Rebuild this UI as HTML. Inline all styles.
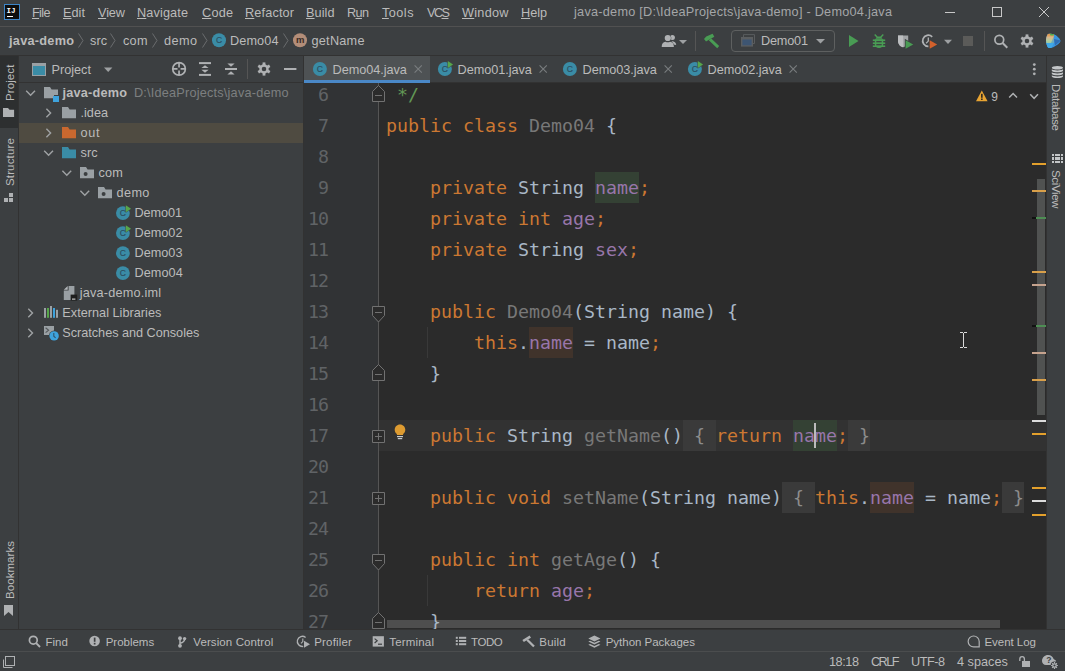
<!DOCTYPE html>
<html lang="en">
<head>
<meta charset="utf-8">
<title>java-demo - Demo04.java</title>
<style>
*{box-sizing:border-box;margin:0;padding:0}
html,body{width:1065px;height:671px;overflow:hidden;background:#3c3f41}
body{position:relative;font-family:"Liberation Sans",sans-serif;font-size:12.7px;color:#bbbbbb;line-height:1}
.a{position:absolute}
.t{position:absolute;white-space:pre;line-height:16px;height:16px}
.b{font-size:11.5px}
.m{margin-top:1px}
u{text-decoration:underline;text-underline-offset:1px;text-decoration-thickness:1px}
svg{position:absolute;overflow:visible}
/* bars */
#menubar{left:0;top:0;width:1065px;height:26px;background:#3c3f41}
#menuline{left:0;top:26px;width:1065px;height:1px;background:#515151}
#navbar{left:0;top:27px;width:1065px;height:28px;background:#3c3f41}
#navline{left:0;top:55px;width:1065px;height:1px;background:#323232}
#lstripe{left:0;top:56px;width:18px;height:573px;background:#3c3f41}
#lstripeline{left:18px;top:56px;width:1px;height:573px;background:#323232}
#projbtn{left:0;top:56px;width:18px;height:72px;background:#2d2f30}
#rstripe{left:1047px;top:56px;width:18px;height:573px;background:#3c3f41}
#rstripeline{left:1046px;top:56px;width:1px;height:573px;background:#323232}
#proj{left:19px;top:56px;width:284px;height:573px;background:#3c3f41}
#projhline{left:19px;top:82px;width:284px;height:1px;background:#323232}
#projline{left:303px;top:56px;width:1px;height:573px;background:#323232}
#outrow{left:19px;top:123px;width:284px;height:20px;background:#4f4b41}
#tabs{left:304px;top:56px;width:742px;height:27px;background:#3c3f41}
#tabsel{left:304px;top:56px;width:126px;height:24px;background:#4e5254}
#tabul{left:304px;top:80px;width:126px;height:3px;background:#4a88c7}
#tabsline{left:430px;top:82px;width:616px;height:1px;background:#323232}
#editor{left:304px;top:83px;width:742px;height:546px;background:#2b2b2b;overflow:hidden}
#gutter{left:0;top:0;width:75px;height:546px;background:#313335}
#foldline{left:74px;top:0;width:1px;height:546px;background:#555555}
#caretrow{left:75px;top:337px;width:667px;height:31px;background:#323232}
#botline{left:0;top:629px;width:1065px;height:1px;background:#323232}
#botbar{left:0;top:630px;width:1065px;height:21px;background:#3c3f41}
#statline{left:0;top:651px;width:1065px;height:1px;background:#4b4d4e}
#status{left:0;top:652px;width:1065px;height:19px;background:#3c3f41}
/* code */
.ln{position:absolute;left:0;width:24px;letter-spacing:-1px;text-align:right;font-family:"DejaVu Sans Mono","Liberation Mono",monospace;font-size:18.27px;line-height:31px;height:31px;color:#606366;white-space:pre}
.cl{position:absolute;left:82px;font-family:"DejaVu Sans Mono","Liberation Mono",monospace;font-size:18.27px;line-height:31px;height:31px;color:#a9b7c6;white-space:pre}
.hr,.hw,.fd{display:inline-block;height:31px;vertical-align:top}.hr{background:#344134}.hw{background:#40332b}.fd{background:#3a3a3a}
.k{color:#cc7832}.f{color:#9876aa}.g{color:#787878}.c{color:#629755}.fd{color:#8c8c8c}
</style>
</head>
<body>
<!-- frame -->
<div class="a" id="menubar"></div><div class="a" id="menuline"></div>
<div class="a" id="navbar"></div><div class="a" id="navline"></div>
<div class="a" id="lstripe"></div><div class="a" id="projbtn"></div><div class="a" id="lstripeline"></div>
<div class="a" id="proj"></div><div class="a" id="projhline"></div><div class="a" id="outrow"></div><div class="a" id="projline"></div>
<div class="a" id="tabs"></div><div class="a" id="tabsline"></div><div class="a" id="tabsel"></div><div class="a" id="tabul"></div>
<div class="a" id="editor">
<div class="a" id="gutter"></div>
<div class="a" id="caretrow"></div>
<div class="a" id="foldline"></div>
<div class="a" style="left:733px;top:96px;width:8px;height:236px;background:#505251"></div>
<div class="a" style="left:83px;top:537px;width:613px;height:8px;background:#4e4e4e"></div>

<div class="ln" style="top:-4px">6</div>
<div class="cl" style="top:-4px"><span class="c"> */</span></div>
<div class="ln" style="top:27px">7</div>
<div class="cl" style="top:27px"><span class="k">public class </span><span class="g">Demo04</span> {</div>
<div class="ln" style="top:58px">8</div>
<div class="ln" style="top:89px">9</div>
<div class="cl" style="top:89px">    <span class="k">private </span>String <span class="f hr">name</span><span class="k">;</span></div>
<div class="ln" style="top:120px">10</div>
<div class="cl" style="top:120px">    <span class="k">private int </span><span class="f">age</span><span class="k">;</span></div>
<div class="ln" style="top:151px">11</div>
<div class="cl" style="top:151px">    <span class="k">private </span>String <span class="f">sex</span><span class="k">;</span></div>
<div class="ln" style="top:182px">12</div>
<div class="ln" style="top:213px">13</div>
<div class="cl" style="top:213px">    <span class="k">public </span><span class="g">Demo04</span>(String name) {</div>
<div class="ln" style="top:244px">14</div>
<div class="cl" style="top:244px">        <span class="k">this</span>.<span class="f hw">name</span> = name<span class="k">;</span></div>
<div class="ln" style="top:275px">15</div>
<div class="cl" style="top:275px">    }</div>
<div class="ln" style="top:306px">16</div>
<div class="ln" style="top:337px">17</div>
<div class="cl" style="top:337px">    <span class="k">public </span>String <span class="g">getName</span>()<span class="fd"> { </span><span class="k">return </span><span class="f hr">name</span><span class="k">;</span><span class="fd"> }</span></div>
<div class="ln" style="top:368px">20</div>
<div class="ln" style="top:399px">21</div>
<div class="cl" style="top:399px">    <span class="k">public void </span><span class="g">setName</span>(String name)<span class="fd"> { </span><span class="k">this</span>.<span class="f hw">name</span> = name<span class="k">;</span><span class="fd"> }</span></div>
<div class="ln" style="top:430px">24</div>
<div class="ln" style="top:461px">25</div>
<div class="cl" style="top:461px">    <span class="k">public int </span><span class="g">getAge</span>() {</div>
<div class="ln" style="top:492px">26</div>
<div class="cl" style="top:492px">        <span class="k">return </span><span class="f">age</span><span class="k">;</span></div>
<div class="ln" style="top:523px">27</div>
<div class="cl" style="top:523px">    }</div>

<svg style="left:0;top:0" width="742" height="546"><path d="M74.5,2.5 L80.5,8.5 V18.5 H68.5 V8.5 Z" fill="#2b2b2b" stroke="#717171" stroke-width="1"/><path d="M71.0,12.5 H78.0" stroke="#717171" stroke-width="1"/></svg>
<svg style="left:0;top:0" width="742" height="546"><path d="M68.5,223.5 H80.5 V232.5 L74.5,239 L68.5,232.5 Z" fill="#2b2b2b" stroke="#717171" stroke-width="1"/><path d="M71.0,229.5 H78.0" stroke="#717171" stroke-width="1"/></svg>
<svg style="left:0;top:0" width="742" height="546"><path d="M74.5,281.5 L80.5,287.5 V297.5 H68.5 V287.5 Z" fill="#2b2b2b" stroke="#717171" stroke-width="1"/><path d="M71.0,291.5 H78.0" stroke="#717171" stroke-width="1"/></svg>
<svg style="left:0;top:0" width="742" height="546"><path d="M68.5,347.5 H80.5 V359.5 H68.5 Z" fill="#2b2b2b" stroke="#717171" stroke-width="1"/><path d="M71.0,353.5 H78.0 M74.5,350 V357" stroke="#717171" stroke-width="1"/></svg>
<svg style="left:0;top:0" width="742" height="546"><path d="M68.5,409.5 H80.5 V421.5 H68.5 Z" fill="#2b2b2b" stroke="#717171" stroke-width="1"/><path d="M71.0,415.5 H78.0 M74.5,412 V419" stroke="#717171" stroke-width="1"/></svg>
<svg style="left:0;top:0" width="742" height="546"><path d="M68.5,471.5 H80.5 V480.5 L74.5,487 L68.5,480.5 Z" fill="#2b2b2b" stroke="#717171" stroke-width="1"/><path d="M71.0,477.5 H78.0" stroke="#717171" stroke-width="1"/></svg>
<svg style="left:0;top:0" width="742" height="546"><path d="M74.5,529.5 L80.5,535.5 V545.5 H68.5 V535.5 Z" fill="#2b2b2b" stroke="#717171" stroke-width="1"/><path d="M71.0,539.5 H78.0" stroke="#717171" stroke-width="1"/></svg>
<div class="a" style="left:123px;top:244px;width:1px;height:31px;background:#393939"></div>
<div class="a" style="left:123px;top:492px;width:1px;height:31px;background:#393939"></div>
<div class="a" style="left:510px;top:340px;width:2px;height:25px;background:#bbbbbb"></div>
<div class="a" style="left:728px;top:80px;width:14px;height:2px;background:#e3a02c"></div>
<div class="a" style="left:728px;top:107px;width:14px;height:2px;background:#d9a04a"></div>
<div class="a" style="left:728px;top:134px;width:4px;height:2px;background:#111"></div>
<div class="a" style="left:732px;top:134px;width:10px;height:2px;background:#4e8e54"></div>
<div class="a" style="left:728px;top:188px;width:14px;height:2px;background:#d9a04a"></div>
<div class="a" style="left:728px;top:201px;width:14px;height:2px;background:#c6a38e"></div>
<div class="a" style="left:728px;top:242px;width:4px;height:2px;background:#111"></div>
<div class="a" style="left:732px;top:242px;width:10px;height:2px;background:#4e8e54"></div>
<div class="a" style="left:728px;top:269px;width:14px;height:2px;background:#c6a38e"></div>
<div class="a" style="left:728px;top:296px;width:14px;height:2px;background:#d9a04a"></div>
<div class="a" style="left:728px;top:337px;width:14px;height:2px;background:#dcdcdc"></div>
<div class="a" style="left:728px;top:350px;width:14px;height:2px;background:#e3a02c"></div>
<div class="a" style="left:728px;top:404px;width:14px;height:2px;background:#e3a02c"></div>
<div class="a" style="left:728px;top:417px;width:14px;height:2px;background:#dcdcdc"></div>
<div class="a" style="left:728px;top:431px;width:14px;height:2px;background:#e3a02c"></div>

<svg style="left:0;top:0" width="742" height="546">
<g transform="translate(-304,-83)"><path d="M400,424.600 c3,0 5.300,2.300 5.300,5.200 c0,1.900 -0.900,3.100 -2.200,4.300 v1 h-6.200 v-1 c-1.300,-1.200 -2.200,-2.400 -2.200,-4.300 c0,-2.900 2.300,-5.200 5.300,-5.200z" fill="#dd9b31"/><rect x="397" y="436" width="6" height="1.200" fill="#c9cbcc"/><rect x="397.800" y="438" width="4.400" height="1.200" fill="#c9cbcc"/>
<path d="M981.8,90.4 l5.8,10.8 h-11.6z" fill="#e8a432"/><rect x="981.1" y="93.800" width="1.5" height="4" fill="#1f1f1f"/><rect x="981.1" y="98.500" width="1.5" height="1.500" fill="#1f1f1f"/>
<path d="M1009.2,97.6 l3.9,-4.1 l3.9,4.1" fill="none" stroke="#afb1b3" stroke-width="1.5"/><path d="M1030.2,94.2 l3.9,4.1 l3.9,-4.100" fill="none" stroke="#afb1b3" stroke-width="1.5"/>
<g fill="#dadada"><rect x="963" y="333" width="1" height="14"/><rect x="960" y="332" width="3" height="1"/><rect x="964" y="332" width="3" height="1"/><rect x="960" y="347" width="3" height="1"/><rect x="964" y="347" width="3" height="1"/></g>
</g></svg>
<div class="t" style="left:687.2px;top:6px;font-size:12px;letter-spacing:-0.088px">9</div>

</div>
<div class="a" id="rstripeline"></div><div class="a" id="rstripe"></div>
<div class="a" id="botline"></div><div class="a" id="botbar"></div>
<div class="a" id="statline"></div><div class="a" id="status"></div>
<!-- menu bar -->
<svg style="left:4px;top:4px" width="16" height="16" viewBox="0 0 16 16"><rect x="0.5" y="0.5" width="15" height="15" fill="#0d0d0d" stroke="#3d85c8" stroke-width="1"/><text x="2.6" y="9" font-family="Liberation Mono,monospace" font-weight="bold" font-size="7.5" fill="#ffffff">IJ</text><rect x="3" y="12" width="6" height="1" fill="#ffffff"/></svg>
<div class="t m" style="left:32px;top:4px;letter-spacing:-0.656px"><u>F</u>ile</div>
<div class="t m" style="left:63px;top:4px;letter-spacing:0.042px"><u>E</u>dit</div>
<div class="t m" style="left:98px;top:4px;letter-spacing:-0.094px"><u>V</u>iew</div>
<div class="t m" style="left:137px;top:4px;letter-spacing:0.129px"><u>N</u>avigate</div>
<div class="t m" style="left:202px;top:4px;letter-spacing:0.219px"><u>C</u>ode</div>
<div class="t m" style="left:245px;top:4px;letter-spacing:0.147px"><u>R</u>efactor</div>
<div class="t m" style="left:306px;top:4px;letter-spacing:0.070px"><u>B</u>uild</div>
<div class="t m" style="left:347px;top:4px;letter-spacing:-0.648px">R<u>u</u>n</div>
<div class="t m" style="left:382px;top:4px;letter-spacing:0.469px"><u>T</u>ools</div>
<div class="t m" style="left:427px;top:4px;letter-spacing:-1.547px">VC<u>S</u></div>
<div class="t m" style="left:462px;top:4px;letter-spacing:0.272px"><u>W</u>indow</div>
<div class="t m" style="left:521px;top:4px;letter-spacing:-0.036px"><u>H</u>elp</div>
<div class="t" style="left:574px;top:4px;color:#a4a6a8;letter-spacing:0.253px">java-demo [D:\IdeaProjects\java-demo] - Demo04.java</div>
<svg style="left:945px;top:12px" width="10" height="1"><rect width="10" height="1" fill="#c8c8c8"/></svg>
<svg style="left:992px;top:7px" width="10" height="10"><rect x="0.5" y="0.5" width="9" height="9" fill="none" stroke="#c8c8c8" stroke-width="1"/></svg>
<svg style="left:1039px;top:7px" width="10" height="10"><path d="M0,0 L10,10 M10,0 L0,10" stroke="#c8c8c8" stroke-width="1" fill="none"/></svg>

<!-- nav bar -->
<div class="t n" style="left:9px;top:33px;font-weight:bold;letter-spacing:0.279px">java-demo</div>
<div class="t n" style="left:90px;top:33px;letter-spacing:0.039px">src</div>
<div class="t n" style="left:123px;top:33px;letter-spacing:0.266px">com</div>
<div class="t n" style="left:164px;top:33px;letter-spacing:0.417px">demo</div>
<div class="t n" style="left:230px;top:33px;letter-spacing:0.106px">Demo04</div>
<div class="t n" style="left:311.5px;top:33px;letter-spacing:0.253px">getName</div>
<svg style="left:0;top:0" width="400" height="56"><g fill="none" stroke="#6a6c6e" stroke-width="1"><path d="M78.5,33.5 L83,40.5 L78.5,47.5"/><path d="M110.5,33.5 L115,40.5 L110.5,47.5"/><path d="M152.5,33.5 L157,40.5 L152.5,47.5"/><path d="M202.5,33.5 L207,40.5 L202.5,47.5"/><path d="M283.5,33.5 L288,40.5 L283.5,47.5"/></g>
<circle cx="219" cy="40.3" r="7" fill="#3a8ca6"/><text x="215.9" y="43.4" font-family="Liberation Sans,sans-serif" font-size="8.6" fill="#2c4c60" stroke="#2c4c60" stroke-width="0.15">C</text>
<circle cx="300" cy="40.3" r="7" fill="#b38d78"/><text x="295.9" y="43.3" font-family="Liberation Sans,sans-serif" font-weight="bold" font-size="9.5" fill="#3a2c25">m</text></svg>

<!-- toolbar -->
<svg style="left:0;top:0" width="1065" height="56">
<!-- users -->
<g fill="#afb1b3"><circle cx="672.4" cy="37.600" r="2.500"/><path d="M671.5,41.200 c2.600,-0.200 4.700,1.200 4.700,3.800 l-3,-0.600z"/><g stroke="#3c3f41" stroke-width="1" paint-order="stroke"><circle cx="667.800" cy="38" r="3.100"/><path d="M661.700,47 c0,-3.200 1.400,-4.800 3.800,-5.200 c1.400,0.700 3.200,0.700 4.600,0 c2.400,0.400 3.800,2 3.800,5.200z"/></g></g>
<path d="M679,40 h8 l-4,4z" fill="#9da0a2"/>
<rect x="695" y="31" width="1" height="20" fill="#555555"/>
<!-- hammer -->
<g fill="#499c54"><path d="M704,39 L706.200,36.400 L712.600,33.800 L714.300,36.800 L706,41.600z"/><path d="M708.800,40.200 L711.200,38.400 L719.200,46 L717.200,48.200z"/></g>
<!-- run config -->
<rect x="731.5" y="30.5" width="103" height="21" rx="3.5" fill="none" stroke="#5e6060"/>
<path d="M743.500,37 V34.600 H754.500 V43.500 H753" fill="none" stroke="#595c5e"/>
<rect x="741" y="37" width="12" height="9.600" fill="#5b5e60"/><rect x="742.400" y="39.500" width="9.200" height="5.800" fill="#3d5572"/>
<path d="M816,39 h9 l-4.5,4.5z" fill="#9da0a2"/>
<!-- run -->
<path d="M849,35 L858.5,41 L849,47z" fill="#499c54"/>
<!-- bug -->
<g fill="#499c54"><path d="M875.200,34 l2.400,2.500 h2.800 l2.400,-2.500 l1,1 l-2.300,2.400 c0.600,0.400 0.900,0.900 1,1.400 h-7 c0.100,-0.500 0.400,-1 1,-1.400 l-2.300,-2.400z"/><path d="M874.800,39.300 h8.400 v5.500 c0,2 -1.800,3.200 -4.200,3.200 c-2.400,0 -4.200,-1.200 -4.200,-3.200z"/><rect x="872.800" y="39.400" width="12.400" height="1.600"/><rect x="872.800" y="42.400" width="12.400" height="1.600"/><rect x="872.800" y="45.400" width="12.400" height="1.600"/></g><g fill="#3c3f41"><rect x="876.300" y="41.100" width="5.400" height="1.200"/><rect x="876.300" y="44.100" width="5.400" height="1.200"/></g>
<!-- coverage -->
<path d="M898,35.400 H908.200 V41 C908.200,44.500 905.500,46.500 903.100,47.300 C900.500,46.500 898,44.500 898,41z" fill="#a2a5a7"/><path d="M898,35.400 H903.100 V47.300 C900.500,46.500 898,44.500 898,41z" fill="#bcbec0"/>
<path d="M905.600,40.200 L913.200,44.500 L905.600,48.800z" fill="#499c54" stroke="#3c3f41" stroke-width="1.600" paint-order="stroke"/>
<!-- profiler -->
<path d="M932.200,36.800 A5.600,5.600 0 1 0 928.400,46.400" fill="none" stroke="#afb1b3" stroke-width="1.700"/><path d="M928.300,37.600 v3.500 l-2.200,2.200" fill="none" stroke="#afb1b3" stroke-width="1.300"/>
<path d="M929.700,40.200 L937.200,44.500 L929.700,48.800z" fill="#d2612c" stroke="#3c3f41" stroke-width="1.200" paint-order="stroke"/>
<path d="M944,39.7 h8 l-4,4.2z" fill="#9da0a2"/>
<rect x="963" y="36" width="10" height="10" fill="#5b5b59"/>
<rect x="984" y="31" width="1" height="20" fill="#555555"/>
<!-- search -->
<circle cx="999.3" cy="39.7" r="4.4" fill="none" stroke="#afb1b3" stroke-width="1.7"/><path d="M1002.6,43 L1007.3,47.7" stroke="#afb1b3" stroke-width="2" fill="none"/>
<!-- gear -->
<g transform="translate(1027,41)"><circle r="3.5" fill="none" stroke="#afb1b3" stroke-width="2.4"/><g fill="#afb1b3"><rect x="-1.4" y="-6.6" width="2.8" height="3"/><rect x="-1.4" y="3.6" width="2.8" height="3"/><rect x="-1.4" y="-6.6" width="2.8" height="3" transform="rotate(60)"/><rect x="-1.4" y="3.6" width="2.8" height="3" transform="rotate(60)"/><rect x="-1.4" y="-6.6" width="2.8" height="3" transform="rotate(120)"/><rect x="-1.4" y="3.6" width="2.8" height="3" transform="rotate(120)"/></g></g>
<!-- colorful -->
<defs><clipPath id="cwm"><path d="M1047.600,34.200 C1049.500,33.400 1052.500,33.600 1054.600,34.800 C1057,36.200 1059.200,38 1060.200,40 C1060.600,40.800 1060.500,41.600 1059.800,42.400 C1058,44.600 1054,47.200 1050.800,48 C1049,48.400 1047.800,47.800 1047.200,46.200 C1045.600,42.400 1045.600,38 1047.600,34.200z"/></clipPath>
<linearGradient id="cwg" x1="0" y1="0" x2="0" y2="1"><stop offset="0" stop-color="#e8923a"/><stop offset="0.25" stop-color="#e0a05c"/><stop offset="0.45" stop-color="#d8b88e"/><stop offset="0.75" stop-color="#b4cc9c"/><stop offset="1" stop-color="#9ccaa4"/></linearGradient></defs>
<g clip-path="url(#cwm)"><rect x="1045" y="33" width="16" height="16" fill="#3b95e0"/>
<path d="M1052,33 L1061,40 L1061,33z" fill="#3a9fdc"/>
<path d="M1054,39 L1061,40.500 L1055,45.500z" fill="#2f6db5"/>
<path d="M1045,43 H1054 L1051,49 H1045z" fill="#3fa8e8"/>
<rect x="1045" y="33" width="9" height="10" fill="url(#cwg)"/>
<path d="M1049.500,33 H1055.500 L1053.500,35.600 H1050.500z" fill="#4caf50"/>
<path d="M1054,36 L1054,43 L1051,43z" fill="#3a8fd0" opacity="0.550"/></g>
</svg>
<div class="t" style="left:761px;top:33px;letter-spacing:-0.194px">Demo01</div>

<svg style="left:0;top:0" width="1065" height="640">
<path d="M3,108 h5 l1.500,1.800 h4.600 v7.200 h-11.100z" fill="#afb1b3"/>
<g fill="#afb1b3"><rect x="9" y="193" width="4" height="4"/><rect x="4" y="198" width="4" height="4"/><rect x="9" y="198" width="4" height="4"/></g>
<path d="M4,605 h9 v11 l-4.500,-4 l-4.500,4z" fill="#afb1b3"/>
<g fill="#c3c6c8"><ellipse cx="1057.400" cy="67.700" rx="5.600" ry="1.800"/><path d="M1051.800,69.300 c1.200,1.500 10,1.500 11.200,0 v1.600 c-1.200,1.900 -10,1.900 -11.200,0z"/><path d="M1051.800,72.300 c1.200,1.500 10,1.500 11.200,0 v1.600 c-1.200,1.900 -10,1.900 -11.200,0z"/><path d="M1051.800,75.300 c1.200,1.500 10,1.500 11.200,0 v1.200 c-1.200,2.100 -10,2.100 -11.200,0z"/></g>
<g fill="#c3c6c8">
<rect x="1052" y="154" width="2" height="2"/>
<rect x="1055" y="154" width="5" height="2"/>
<rect x="1061" y="154" width="2" height="2"/>
<rect x="1052" y="157" width="2" height="3"/>
<rect x="1055" y="157" width="5" height="3"/>
<rect x="1061" y="157" width="2" height="3"/>
<rect x="1052" y="161" width="2" height="2"/>
<rect x="1055" y="161" width="5" height="2"/>
<rect x="1061" y="161" width="2" height="2"/>
</g>
</svg>
<div class="t" style="left:1.5px;top:101.4px;font-size:11.5px;transform-origin:0 0;transform:rotate(-90deg);letter-spacing:0.101px">Project</div>
<div class="t" style="left:1.5px;top:186px;font-size:11.5px;transform-origin:0 0;transform:rotate(-90deg);letter-spacing:0.141px">Structure</div>
<div class="t" style="left:1.5px;top:599.4px;font-size:11.5px;transform-origin:0 0;transform:rotate(-90deg);letter-spacing:0.059px">Bookmarks</div>
<div class="t" style="left:1064px;top:84px;font-size:11.5px;transform-origin:0 0;transform:rotate(90deg);letter-spacing:-0.319px">Database</div>
<div class="t" style="left:1064px;top:169.8px;font-size:11.5px;transform-origin:0 0;transform:rotate(90deg);letter-spacing:-0.351px">SciView</div>

<!-- project header -->
<svg style="left:0;top:0" width="304" height="350">
<rect x="32.5" y="63.5" width="13" height="12" fill="#3a8ca6" stroke="#9aa0a4"/><rect x="32" y="63" width="14" height="3" fill="#9aa0a4"/>
<path d="M104,67.5 h8.4 l-4.2,4.6z" fill="#9da0a2"/>
<g fill="none" stroke="#afb1b3"><circle cx="179.050" cy="68.900" r="6.300" stroke-width="1.700"/><path d="M179.050,62.500 v4.900 M179.050,70.400 v4.900 M172.600,68.900 h4.900 M180.600,68.900 h4.900" stroke-width="1.700"/></g>
<g fill="#afb1b3"><rect x="199" y="62.100" width="12" height="2"/><rect x="199" y="73.900" width="12" height="2"/><path d="M205,65.200 l3.600,2.900 h-7.200z"/><path d="M205,72.700 l3.600,-2.900 h-7.200z"/></g>
<g fill="#afb1b3"><rect x="225" y="68" width="12" height="2"/><path d="M231,66.700 l3.600,-3.200 h-7.200z"/><path d="M231,71.300 l3.600,3.200 h-7.200z"/></g>
<rect x="247" y="59" width="1" height="20" fill="#555555"/>
<g transform="translate(264,69)"><circle r="3.5" fill="none" stroke="#afb1b3" stroke-width="2.4"/><g fill="#afb1b3"><rect x="-1.4" y="-6.6" width="2.8" height="3"/><rect x="-1.4" y="3.6" width="2.8" height="3"/><rect x="-1.4" y="-6.6" width="2.8" height="3" transform="rotate(60)"/><rect x="-1.4" y="3.6" width="2.8" height="3" transform="rotate(60)"/><rect x="-1.4" y="-6.6" width="2.8" height="3" transform="rotate(120)"/><rect x="-1.4" y="3.6" width="2.8" height="3" transform="rotate(120)"/></g></g>
<rect x="284" y="68" width="12.4" height="2" fill="#afb1b3"/>
<path d="M26.2,90.7 l4.4,4.6 l4.4,-4.6" fill="none" stroke="#9fa2a4" stroke-width="1.4"/>
<path d="M44,87 h6 l1.6,2.6 h6.4 v5.4 h-4 v3.2 h-10z" fill="#9aa0a4"/><rect x="53" y="96" width="6" height="6" fill="#3ea3dd"/>
<path d="M46.4,108.8 l4.200,4.200 l-4.200,4.200" fill="none" stroke="#9fa2a4" stroke-width="1.400"/>
<path d="M62,107 h6 l1.6,2.6 h6.4 v8.6 h-14z" fill="#9aa0a4"/>
<path d="M46.4,128.8 l4.200,4.200 l-4.200,4.200" fill="none" stroke="#9fa2a4" stroke-width="1.400"/>
<path d="M62,127 h6 l1.6,2.6 h6.4 v8.6 h-14z" fill="#c9682f"/>
<path d="M44.2,150.7 l4.4,4.6 l4.4,-4.6" fill="none" stroke="#9fa2a4" stroke-width="1.4"/>
<path d="M62,147 h6 l1.6,2.6 h6.4 v8.6 h-14z" fill="#3a8ca6"/>
<path d="M62.4,170.7 l4.4,4.6 l4.4,-4.6" fill="none" stroke="#9fa2a4" stroke-width="1.4"/>
<path d="M80,167 h6 l1.6,2.6 h6.4 v8.6 h-14z" fill="#9aa0a4"/><circle cx="85.6" cy="174" r="2" fill="#3c3f41"/>
<path d="M80.4,190.7 l4.4,4.6 l4.4,-4.6" fill="none" stroke="#9fa2a4" stroke-width="1.4"/>
<path d="M98,187 h6 l1.6,2.6 h6.4 v8.6 h-14z" fill="#9aa0a4"/><circle cx="103.6" cy="194" r="2" fill="#3c3f41"/>
<circle cx="122.9" cy="213.1" r="6.9" fill="#3a8ca6"/><text x="119.8" y="216.2" font-family="Liberation Sans,sans-serif" font-size="8.6" fill="#2c4c60" stroke="#2c4c60" stroke-width="0.15">C</text><path d="M125.8,205.2 l5.3,3.5 l-5.3,3.5z" fill="#57a64a" stroke="#3c3f41" stroke-width="0.8" paint-order="stroke"/>
<circle cx="122.9" cy="233.1" r="6.9" fill="#3a8ca6"/><text x="119.8" y="236.2" font-family="Liberation Sans,sans-serif" font-size="8.6" fill="#2c4c60" stroke="#2c4c60" stroke-width="0.15">C</text><path d="M125.8,225.2 l5.3,3.5 l-5.3,3.5z" fill="#57a64a" stroke="#3c3f41" stroke-width="0.8" paint-order="stroke"/>
<circle cx="122.9" cy="253.1" r="6.9" fill="#3a8ca6"/><text x="119.8" y="256.2" font-family="Liberation Sans,sans-serif" font-size="8.6" fill="#2c4c60" stroke="#2c4c60" stroke-width="0.15">C</text>
<circle cx="122.9" cy="273.1" r="6.9" fill="#3a8ca6"/><text x="119.8" y="276.2" font-family="Liberation Sans,sans-serif" font-size="8.6" fill="#2c4c60" stroke="#2c4c60" stroke-width="0.15">C</text>
<path d="M68.600,286 h5.800 v14 h-10.600 v-9.400 h4.800z" fill="#9aa0a4"/><path d="M63.800,289.700 l3.900,-3.700 v3.700z" fill="#b4b8bb"/><rect x="70.6" y="294.6" width="6.6" height="6" fill="#1e1e1e"/><rect x="72" y="298.6" width="3.4" height="1" fill="#e8e8e8"/>
<path d="M28.299999999999997,308.8 l4.200,4.200 l-4.200,4.200" fill="none" stroke="#9fa2a4" stroke-width="1.400"/>
<g><rect x="44" y="308" width="2" height="9.8" fill="#9aa0a4"/><rect x="47" y="308" width="2" height="9.8" fill="#57a64a"/><rect x="50" y="306" width="2" height="11.8" fill="#9aa0a4"/><rect x="53" y="308" width="2" height="9.8" fill="#3ea3dd"/><rect x="56" y="309.8" width="2" height="8" fill="#9aa0a4"/></g>
<path d="M28.299999999999997,328.8 l4.200,4.200 l-4.200,4.200" fill="none" stroke="#9fa2a4" stroke-width="1.400"/>
<rect x="44" y="326" width="10" height="9" fill="#9aa0a4"/><path d="M45.6,327.8 l3,2.4 l-3,2.4" fill="none" stroke="#55595b" stroke-width="1.1"/><circle cx="54.1" cy="335.9" r="5.3" fill="#3c3f41"/><circle cx="54.1" cy="335.9" r="4.7" fill="#3ea3dd"/><path d="M53.8,333 v3.2 l1.8,1.6" fill="none" stroke="#30556b" stroke-width="1.1"/>
</svg>
<div class="t" style="left:51.5px;top:62px;letter-spacing:0.000px">Project</div>
<div class="t" style="left:62.5px;top:85px;font-weight:bold;letter-spacing:0.217px">java-demo</div>
<div class="t" style="left:134px;top:85px;color:#7d7f80;letter-spacing:0.208px">D:\IdeaProjects\java-demo</div>
<div class="t" style="left:80.5px;top:105px;letter-spacing:-0.004px">.idea</div>
<div class="t" style="left:80.5px;top:125px;letter-spacing:0.680px">out</div>
<div class="t" style="left:80.5px;top:145px;letter-spacing:0.039px">src</div>
<div class="t" style="left:98.4px;top:165px;letter-spacing:0.266px">com</div>
<div class="t" style="left:116.6px;top:185px;letter-spacing:0.350px">demo</div>
<div class="t" style="left:134.5px;top:205px;letter-spacing:-0.094px">Demo01</div>
<div class="t" style="left:134.5px;top:225px;letter-spacing:0.006px">Demo02</div>
<div class="t" style="left:134.5px;top:245px;letter-spacing:0.006px">Demo03</div>
<div class="t" style="left:134.5px;top:265px;letter-spacing:0.066px">Demo04</div>
<div class="t" style="left:79.7px;top:285px;letter-spacing:0.211px">java-demo.iml</div>
<div class="t" style="left:62.3px;top:305px;letter-spacing:0.016px">External Libraries</div>
<div class="t" style="left:62.3px;top:325px;letter-spacing:-0.025px">Scratches and Consoles</div>

<svg style="left:0;top:0" width="1065" height="110">
<circle cx="319.9" cy="69" r="7" fill="#3a8ca6"/><text x="316.8" y="72.1" font-family="Liberation Sans,sans-serif" font-size="8.6" fill="#2c4c60" stroke="#2c4c60" stroke-width="0.15">C</text>
<path d="M414.59999999999997,65.4 l7.2,7.2 M421.8,65.4 l-7.2,7.2" stroke="#7a7d7f" stroke-width="1.1" fill="none"/>
<circle cx="444.9" cy="69" r="7" fill="#3a8ca6"/><text x="441.8" y="72.1" font-family="Liberation Sans,sans-serif" font-size="8.6" fill="#2c4c60" stroke="#2c4c60" stroke-width="0.15">C</text><path d="M447.8,61.1 l5.3,3.5 l-5.3,3.5z" fill="#57a64a" stroke="#3c3f41" stroke-width="0.8" paint-order="stroke"/>
<path d="M539.6,65.4 l7.2,7.2 M546.8000000000001,65.4 l-7.2,7.2" stroke="#7a7d7f" stroke-width="1.1" fill="none"/>
<circle cx="569.9" cy="69" r="7" fill="#3a8ca6"/><text x="566.8" y="72.1" font-family="Liberation Sans,sans-serif" font-size="8.6" fill="#2c4c60" stroke="#2c4c60" stroke-width="0.15">C</text>
<path d="M664.6,65.4 l7.2,7.2 M671.8000000000001,65.4 l-7.2,7.2" stroke="#7a7d7f" stroke-width="1.1" fill="none"/>
<circle cx="694.9" cy="69" r="7" fill="#3a8ca6"/><text x="691.8" y="72.1" font-family="Liberation Sans,sans-serif" font-size="8.6" fill="#2c4c60" stroke="#2c4c60" stroke-width="0.15">C</text><path d="M697.8,61.1 l5.3,3.5 l-5.3,3.5z" fill="#57a64a" stroke="#3c3f41" stroke-width="0.8" paint-order="stroke"/>
<path d="M789.6,65.4 l7.2,7.2 M796.8000000000001,65.4 l-7.2,7.2" stroke="#7a7d7f" stroke-width="1.1" fill="none"/>
<g fill="#afb1b3"><circle cx="1034.3" cy="64.6" r="1.4"/><circle cx="1034.3" cy="69.2" r="1.4"/><circle cx="1034.3" cy="73.8" r="1.4"/></g>
</svg>
<div class="t" style="left:332.6px;top:62px;letter-spacing:-0.057px">Demo04.java</div>
<div class="t" style="left:457.6px;top:62px;letter-spacing:-0.057px">Demo01.java</div>
<div class="t" style="left:582.6px;top:62px;letter-spacing:-0.057px">Demo03.java</div>
<div class="t" style="left:707.6px;top:62px;letter-spacing:-0.057px">Demo02.java</div>

<!-- bottom tool window bar + status bar -->
<svg style="left:0;top:0" width="1065" height="671">
<g fill="none" stroke="#afb1b3">
<!-- find -->
<circle cx="33.3" cy="640.2" r="3.9" stroke-width="1.7"/><path d="M36.2,643.2 L40,647" stroke-width="1.9"/>
</g>
<!-- problems -->
<circle cx="94.6" cy="641" r="5.3" fill="#afb1b3"/><rect x="93.8" y="637.6" width="1.7" height="4.2" fill="#3c3f41"/><rect x="93.8" y="642.8" width="1.7" height="1.7" fill="#3c3f41"/>
<!-- vcs branch -->
<g fill="#afb1b3"><circle cx="180" cy="638.2" r="1.9"/><circle cx="180" cy="645.8" r="1.9"/><circle cx="184.6" cy="638.6" r="1.7"/></g><path d="M180,638 V646 M184.600,639 c0,3 -2,3.600 -4.600,4.200" fill="none" stroke="#afb1b3" stroke-width="1.5"/>
<!-- profiler -->
<path d="M305.600,637.400 A5.100,5.100 0 1 0 303.200,646.400" fill="none" stroke="#afb1b3" stroke-width="1.3"/><path d="M302.800,638.400 v3.200 l-1.800,1.800" fill="none" stroke="#afb1b3" stroke-width="1.1"/><path d="M304,640.800 L310,644.300 L304,647.800z" fill="#afb1b3"/>
<!-- terminal -->
<rect x="372.700" y="636.200" width="11.200" height="10.400" fill="#afb1b3"/><path d="M374.600,638.600 l2.600,2.200 l-2.600,2.200" fill="none" stroke="#3c3f41" stroke-width="1.2"/><rect x="378" y="643.600" width="4" height="1.200" fill="#3c3f41"/>
<!-- todo -->
<g fill="#afb1b3"><rect x="455.800" y="636.800" width="2" height="2"/><rect x="459" y="636.800" width="7.200" height="2"/><rect x="455.800" y="640" width="2" height="2"/><rect x="459" y="640" width="7.200" height="2"/><rect x="455.800" y="643.200" width="2" height="2"/><rect x="459" y="643.200" width="7.200" height="2"/></g>
<!-- build hammer -->
<g fill="#afb1b3"><path d="M522.400,640 L529.600,635.600 L531,637.700 L523.800,642.100z"/><path d="M526.300,640.500 L528.200,639.300 L534.800,645.700 L533.200,647.200z"/></g>
<!-- python packages layers -->
<g fill="#afb1b3"><path d="M594.400,635.400 l6.100,3 l-6.100,3 l-6.100,-3z"/><path d="M588.300,641.600 l1.800,-0.900 l4.300,2.100 l4.300,-2.100 l1.800,0.900 l-6.100,3z"/><path d="M588.300,644.800 l1.800,-0.900 l4.300,2.100 l4.300,-2.100 l1.800,0.900 l-6.100,3z"/></g>
<!-- event log -->
<path d="M973.600,636 a5.600,5.600 0 0 1 5.600,5.600 v5.300 h-5.600 a5.450,5.450 0 0 1 0,-10.900z" fill="none" stroke="#afb1b3" stroke-width="1.2"/>
<!-- status left icon -->
<path d="M3.500,659.500 v8 h9" fill="none" stroke="#afb1b3" stroke-width="1"/><rect x="5.500" y="656.500" width="9" height="9" fill="none" stroke="#afb1b3" stroke-width="1"/>
<!-- lock -->
<rect x="1022" y="661" width="8" height="6" fill="#afb1b3"/><path d="M1019.800,661 v-2 a2.300,2.300 0 0 1 4.600,0 v2" fill="none" stroke="#afb1b3" stroke-width="1.300"/>
<!-- inspector -->
<path d="M1042,661 c0,-3.400 2.800,-6 6,-6 c3,0 5,1.800 5.600,4 l2.200,1.600 c0.600,0.600 0.200,1.400 -0.600,1.400 h-1.200 l-3,3 h-5 c-2.400,0 -4,-1.800 -4,-4z" fill="#afb1b3"/>
<circle cx="1054.500" cy="665.500" r="3.900" fill="#3c3f41"/>
<g transform="translate(1054.500,665.500)"><circle r="1.700" fill="none" stroke="#afb1b3" stroke-width="1.300"/><g stroke="#afb1b3" stroke-width="1.200"><path d="M0,-3.400 V-2 M0,2 V3.400 M-3.400,0 H-2 M2,0 H3.400 M-2.400,-2.400 L-1.400,-1.400 M1.400,1.400 L2.400,2.400 M-2.400,2.400 L-1.400,1.400 M1.400,-1.400 L2.400,-2.400"/></g></g>
<text x="1046.300" y="663.200" font-family="Liberation Sans,sans-serif" font-weight="bold" font-size="8.500" fill="#3c3f41">?</text>
</svg>
<div class="t b" style="left:45.600px;top:634px;letter-spacing:-0.025px">Find</div>
<div class="t b" style="left:105.700px;top:634px;letter-spacing:-0.011px">Problems</div>
<div class="t b" style="left:193.300px;top:634px;letter-spacing:0.098px">Version Control</div>
<div class="t b" style="left:314.300px;top:634px;letter-spacing:0.152px">Profiler</div>
<div class="t b" style="left:389.300px;top:634px;letter-spacing:0.176px">Terminal</div>
<div class="t b" style="left:471px;top:634px;letter-spacing:-0.439px">TODO</div>
<div class="t b" style="left:539.300px;top:634px;letter-spacing:0.205px">Build</div>
<div class="t b" style="left:605.700px;top:634px;letter-spacing:-0.015px">Python Packages</div>
<div class="t b" style="left:984.500px;top:634px;letter-spacing:-0.050px">Event Log</div>
<div class="t" style="left:829px;top:654px;letter-spacing:-0.438px">18:18</div>
<div class="t" style="left:871px;top:654px;letter-spacing:-1.580px">CRLF</div>
<div class="t" style="left:911px;top:654px;letter-spacing:-0.488px">UTF-8</div>
<div class="t" style="left:957px;top:654px;letter-spacing:0.003px">4 spaces</div>

</body>
</html>
